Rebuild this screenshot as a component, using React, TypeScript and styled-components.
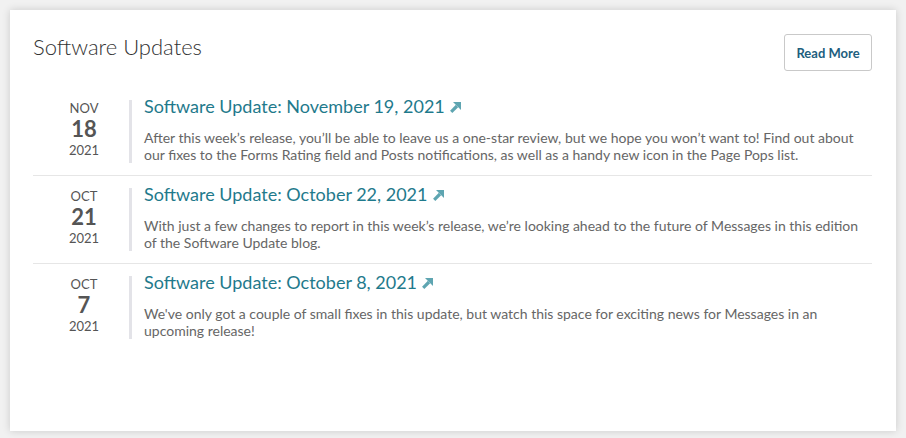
import React from 'react';
import styled, { createGlobalStyle } from 'styled-components';

const GlobalStyle = createGlobalStyle`
  html, body {
    margin: 0;
    padding: 0;
    background: #f1f1f1;
    font-family: Lato, "Open Sans", Arial, sans-serif;
  }
  * {
    box-sizing: border-box;
  }
`;

interface IUpdate {
  month: string;
  day: string;
  year: string;
  title: string;
  text: string;
}

const UPDATES: IUpdate[] = [
  {
    month: 'Nov',
    day: '18',
    year: '2021',
    title: 'Software Update: November 19, 2021',
    text: 'After this week’s release, you’ll be able to leave us a one-star review, but we hope you won’t want to! Find out about our fixes to the Forms Rating field and Posts notifications, as well as a handy new icon in the Page Pops list.',
  },
  {
    month: 'Oct',
    day: '21',
    year: '2021',
    title: 'Software Update: October 22, 2021',
    text: 'With just a few changes to report in this week’s release, we’re looking ahead to the future of Messages in this edition of the Software Update blog.',
  },
  {
    month: 'Oct',
    day: '7',
    year: '2021',
    title: 'Software Update: October 8, 2021',
    text: "We've only got a couple of small fixes in this update, but watch this space for exciting news for Messages in an upcoming release!",
  },
];

const Page = styled.div`
  padding: 10px;
`;

const Card = styled.section`
  height: 421px;
  background: #fff;
  padding: 24px 24px 0 23px;
  box-shadow: 0 0 8px rgba(0, 0, 0, 0.16);
`;

const Header = styled.div`
  display: flex;
  justify-content: space-between;
  align-items: flex-start;
  margin-bottom: 17px;
`;

const Heading = styled.h2`
  margin: 0;
  font-size: 22px;
  font-weight: 300;
  color: #333;
  line-height: 1.2;
`;

const Button = styled.button`
  width: 88px;
  height: 37px;
  background: #fff;
  border: 1px solid #c9c9c9;
  border-radius: 3px;
  font-family: Lato, Arial, sans-serif;
  font-size: 13px;
  font-weight: 700;
  color: #215e7e;
  cursor: pointer;
`;

const Row = styled.article<{ last: boolean }>`
  display: flex;
  padding: 12px 0;
  border-bottom: ${({ last }) => (last ? 'none' : '1px solid #e6e6e6')};
`;

const DateCol = styled.div`
  width: 90px;
  margin-left: 6px;
  padding-top: 1px;
  display: flex;
  flex-direction: column;
  align-items: center;
  color: #555;
`;

const Month = styled.span`
  font-size: 13px;
  line-height: 15px;
  text-transform: uppercase;
`;

const Day = styled.span`
  font-size: 22px;
  line-height: 26px;
  font-weight: 700;
`;

const Year = styled.span`
  font-size: 13px;
  line-height: 16px;
`;

const Body = styled.div`
  flex: 1;
  border-left: 3px solid #e3e3e8;
  padding-left: 12px;
  height: 63px;
`;

const Title = styled.a`
  display: flex;
  align-items: flex-end;
  gap: 5px;
  margin-top: -3px;
  font-size: 18px;
  line-height: 18px;
  color: #1f7a8c;
  text-decoration: none;
  cursor: pointer;
`;

const Arrow = styled.svg`
  width: 11px;
  height: 11px;
  margin-bottom: 2px;
  color: #5ea5b1;
`;

const Text = styled.p`
  margin: 15px 0 0;
  font-size: 14px;
  line-height: 1.2;
  color: #666;
`;

const ExternalArrow = () => (
  <Arrow viewBox="0 0 11 11">
    <path d="M1.2 9.8L7 4" stroke="currentColor" strokeWidth="3.2" />
    <path d="M3 0H11V8Z" fill="currentColor" />
  </Arrow>
);

const App = () => {
  const renderUpdate = (item: IUpdate, index: number) => (
    <Row key={item.title} last={index === UPDATES.length - 1}>
      <DateCol>
        <Month>{item.month}</Month>
        <Day>{item.day}</Day>
        <Year>{item.year}</Year>
      </DateCol>
      <Body>
        <Title>
          {item.title}
          <ExternalArrow />
        </Title>
        <Text>{item.text}</Text>
      </Body>
    </Row>
  );

  return (
    <>
      <GlobalStyle />
      <Page>
        <Card>
          <Header>
            <Heading>Software Updates</Heading>
            <Button>Read More</Button>
          </Header>
          {UPDATES.map(renderUpdate)}
        </Card>
      </Page>
    </>
  );
};

export default App;
